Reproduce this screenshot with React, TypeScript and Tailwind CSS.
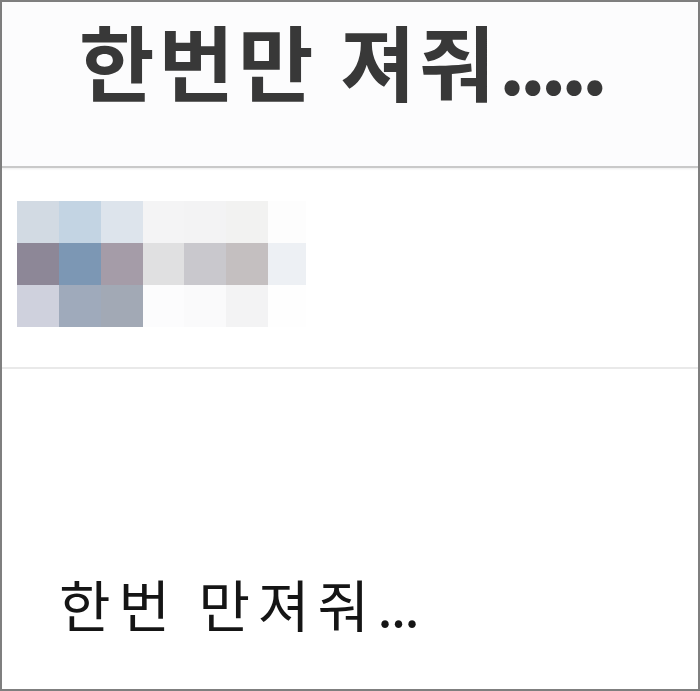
const mosaic = [
  ["bg-[#d2dae3]", "bg-[#c3d4e3]", "bg-[#dde4ec]", "bg-[#f4f4f5]", "bg-[#f3f3f4]", "bg-[#f2f2f1]", "bg-[#fdfdfd]"],
  ["bg-[#8d8797]", "bg-[#7c97b4]", "bg-[#a59ca8]", "bg-[#e0e0e1]", "bg-[#c9c8cd]", "bg-[#c4bfc0]", "bg-[#edf0f4]"],
  ["bg-[#cfd1dd]", "bg-[#9faabb]", "bg-[#a2a9b5]", "bg-[#fcfcfd]", "bg-[#fafafb]", "bg-[#f3f3f4]", "bg-[#fefefe]"],
]

export default function App() {
  return (
    <div className="flex h-[691px] w-[700px] flex-col border-2 border-[#7f7f7f] bg-white font-['Noto_Sans_CJK_KR',sans-serif]">
      <header className="h-[166px] shrink-0 border-b-2 border-[#c9c9c9] bg-[#fcfcfd] pl-[77px] pt-[9px] shadow-[0_1px_2px_rgba(0,0,0,0.08)]">
        <h1 className="w-fit whitespace-nowrap text-[82px] font-bold leading-[1.2] tracking-[4px] text-[#383838]">
          한번만 져줘<span className="pr-[8px] tracking-[-6px]">.....</span>
        </h1>
      </header>

      <section className="h-[201px] shrink-0 border-b-2 border-[#e9e9e9] pl-[15px] pt-[33px]">
        <div className="grid w-fit grid-cols-[42px_42px_42px_41px_42px_42px_38px] grid-rows-[42px_42px_42px] blur-[0.4px]">
          {mosaic.flat().map((c, i) => (
            <div key={i} className={c} />
          ))}
        </div>
      </section>

      <section className="flex-1 pl-[57px] pt-[200px]">
        <p className="w-fit whitespace-nowrap text-[56px] leading-[1.2] tracking-[8px] text-[#151515]">
          한번 만져줘<span className="pr-[4px] tracking-[-2px]">...</span>
        </p>
      </section>
    </div>
  )
}
